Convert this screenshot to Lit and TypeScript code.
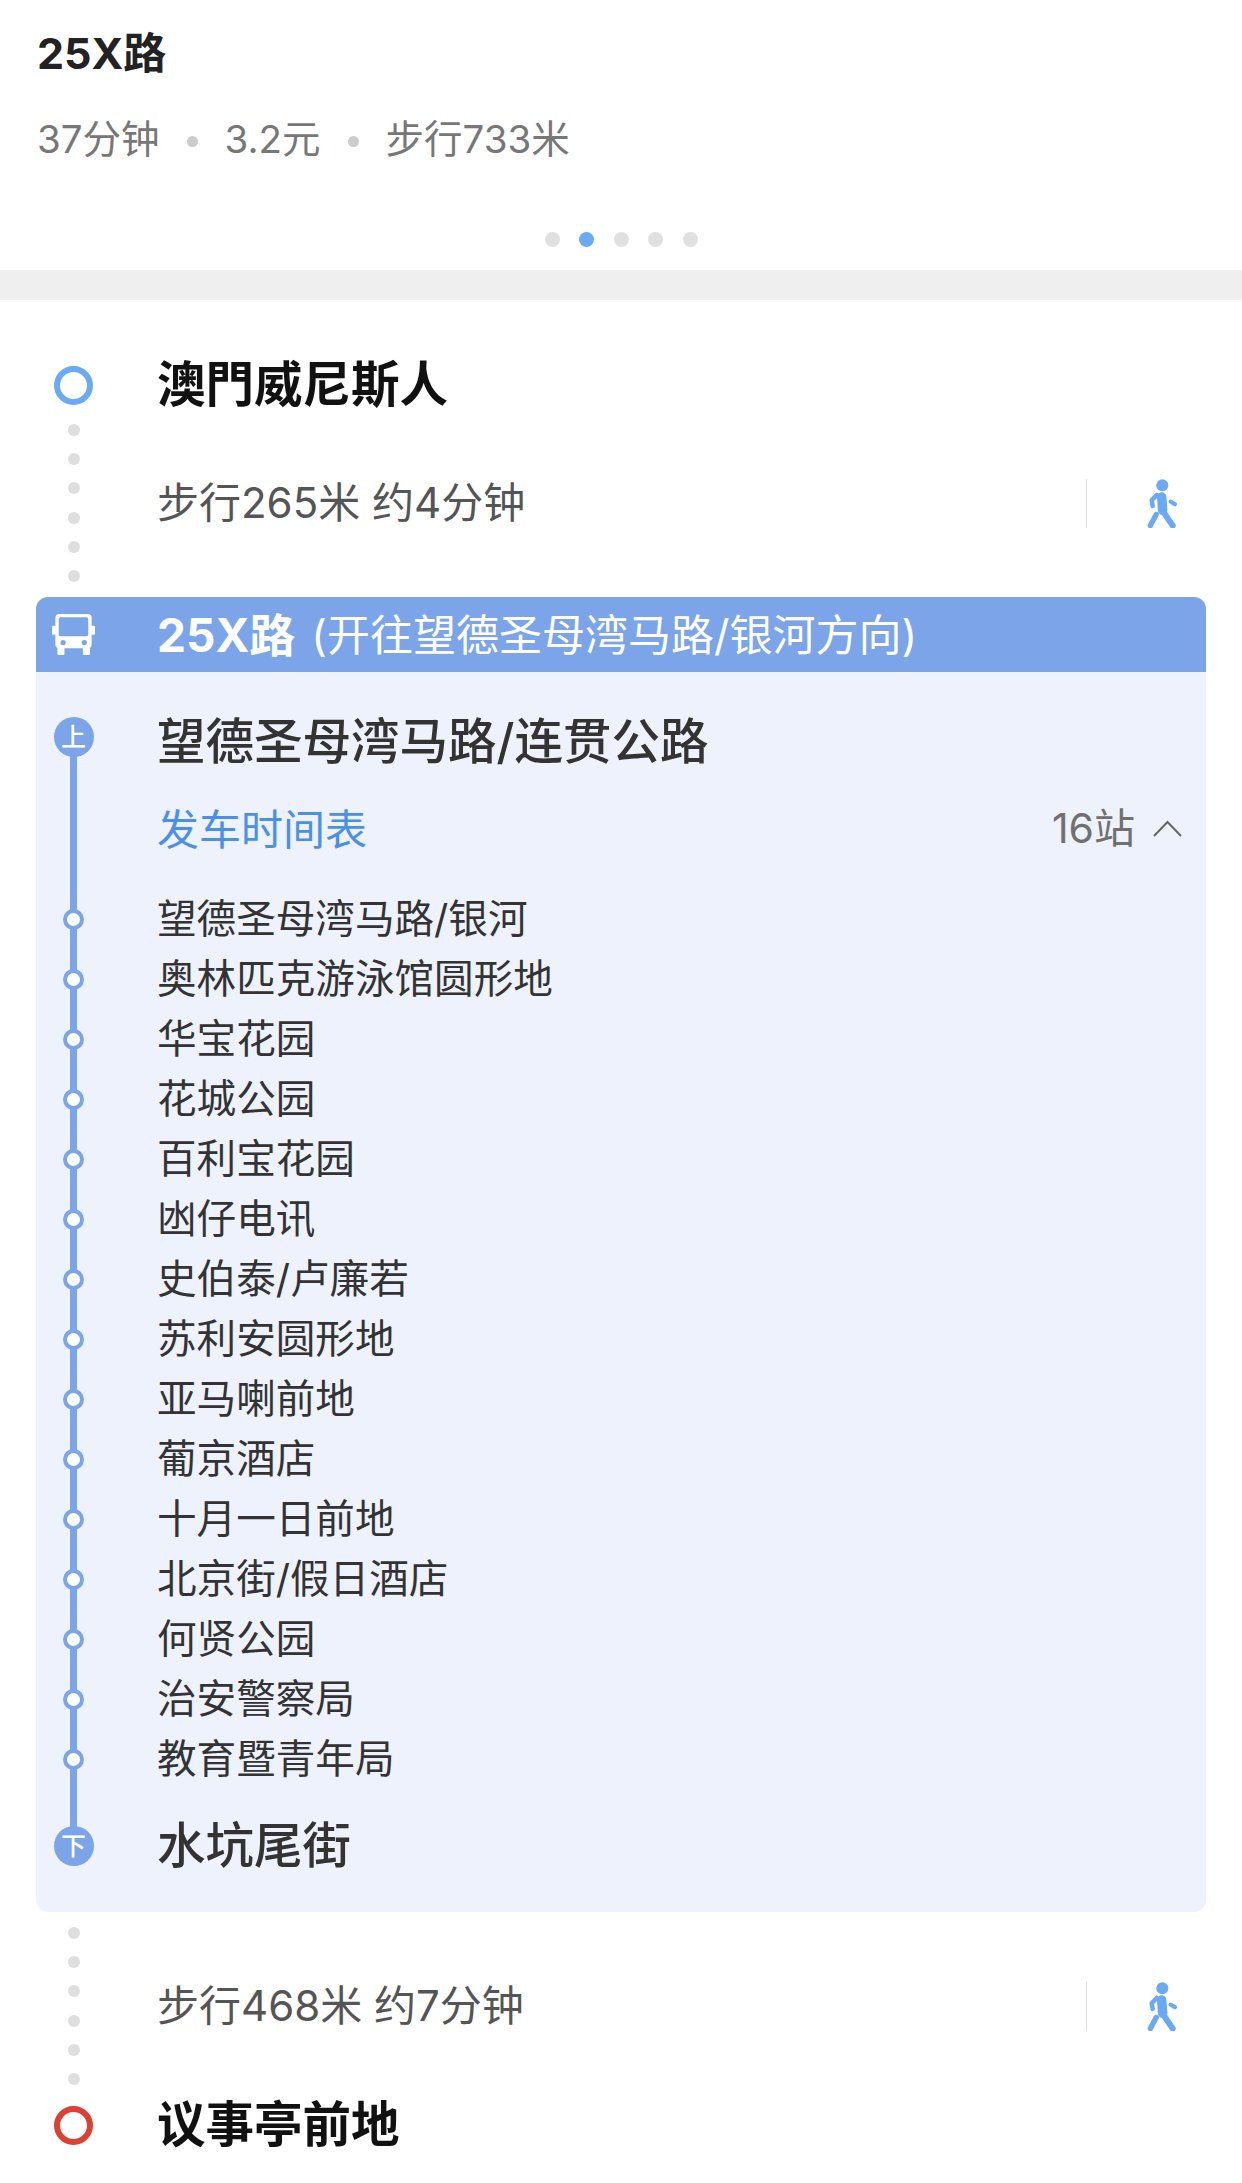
import { LitElement, html, css, svg } from "lit";
import { customElement } from "lit/decorators.js";

const STOPS = [
  "望德圣母湾马路/银河",
  "奥林匹克游泳馆圆形地",
  "华宝花园",
  "花城公园",
  "百利宝花园",
  "凼仔电讯",
  "史伯泰/卢廉若",
  "苏利安圆形地",
  "亚马喇前地",
  "葡京酒店",
  "十月一日前地",
  "北京街/假日酒店",
  "何贤公园",
  "治安警察局",
  "教育暨青年局",
];

const walker = svg`
  <circle cx="15.3" cy="6.3" r="6" fill="#6aa9f4"></circle>
  <g fill="none" stroke="#6aa9f4" stroke-linecap="round" stroke-linejoin="round">
    <path d="M14.7 18L15.7 31.3" stroke-width="9.5"></path>
    <path d="M9.7 16L4.7 21.3L5.7 27" stroke-width="4.5"></path>
    <path d="M23.5 22.5L28 25.3" stroke-width="4"></path>
    <path d="M17 33.7L20.3 38.7L25.7 46.5" stroke-width="6"></path>
    <path d="M9.2 35.5L3.4 46.5" stroke-width="5.4"></path>
  </g>`;

@customElement("app-root")
export class AppRoot extends LitElement {
  static styles = css`
    :host {
      display: block;
      width: 1242px;
      height: 2183px;
      overflow: hidden;
      background: #fff;
      font-family: Inter, "Noto Sans CJK SC", sans-serif;
    }
    .summary {
      height: 270px;
      box-sizing: border-box;
      padding: 23px 37px 0;
    }
    .title {
      font-size: 43px;
      line-height: 60px;
      font-weight: 700;
      color: #222;
    }
    .meta {
      display: flex;
      align-items: center;
      gap: 27px;
      margin-top: 26px;
      font-size: 38.5px;
      line-height: 60px;
      color: #777;
    }
    .sep {
      width: 11px;
      height: 11px;
      border-radius: 50%;
      background: #ccc;
      margin-top: 4px;
    }
    .pager {
      display: flex;
      justify-content: center;
      gap: 19.5px;
      margin-top: 63px;
    }
    .pager i {
      width: 15px;
      height: 15px;
      border-radius: 50%;
      background: #e0e0e0;
    }
    .pager i.on {
      background: #6aa9f4;
    }
    .band {
      height: 30px;
      background: #efefef;
    }
    .route {
      padding: 46px 36px 0;
    }
    .row {
      display: grid;
      grid-template-columns: 75px 1fr;
      column-gap: 46px;
      align-items: center;
      line-height: 60px;
    }
    .rail {
      display: flex;
      flex-direction: column;
      align-items: center;
      justify-content: center;
    }
    .place {
      height: 78px;
      font-size: 48.5px;
      font-weight: 700;
      color: #111;
    }
    .place.last {
      margin-top: 1px;
    }
    .ring {
      width: 39px;
      height: 39px;
      box-sizing: border-box;
      border-radius: 50%;
      border: 6px solid #6aa9f4;
    }
    .ring.end {
      border-color: #dd3f33;
    }
    .walk {
      height: 158px;
    }
    .dots {
      gap: 17.2px;
    }
    .dots i {
      width: 12px;
      height: 12px;
      border-radius: 50%;
      background: #dedede;
    }
    .walk-body {
      display: flex;
      align-items: center;
      font-size: 42px;
      color: #555;
      padding-right: 29px;
    }
    .divider {
      width: 1.5px;
      height: 49px;
      background: #ddd;
      margin-left: auto;
    }
    .walk-body svg {
      width: 30px;
      height: 49px;
      margin-left: 60px;
    }
    .panel {
      margin: 15px 0;
      background: #edf2fc;
      border-radius: 12px;
      overflow: hidden;
    }
    .panel-head {
      height: 75px;
      background: #7ba5e8;
      color: #fff;
      font-size: 43px;
    }
    .panel-head svg {
      width: 43px;
      height: 41px;
      display: block;
    }
    .head-text {
      display: flex;
      align-items: center;
      white-space: nowrap;
    }
    .head-text b {
      font-size: 46px;
      font-weight: 700;
      margin-right: 16px;
    }
    .panel-body {
      position: relative;
      padding: 40px 24px 36px 0;
    }
    .line {
      position: absolute;
      left: 34px;
      top: 65px;
      bottom: 65px;
      width: 7px;
      background: #7ba5e8;
    }
    .panel-body .row {
      position: relative;
      height: 60px;
    }
    .major {
      font-size: 48.5px;
      font-weight: 500;
      color: #333;
    }
    .badge {
      width: 40px;
      height: 40px;
      border-radius: 50%;
      background: #7ba5e8;
      color: #fff;
      font-size: 25px;
      line-height: 40px;
      text-align: center;
    }
    .board .badge {
      margin-top: -10px;
    }
    .timetable,
    .alight {
      margin-top: 28px;
    }
    .timetable-body {
      display: flex;
      align-items: center;
      justify-content: space-between;
    }
    .link {
      font-size: 42px;
      color: #4a90e8;
    }
    .count {
      display: flex;
      align-items: center;
      gap: 18px;
      font-size: 41px;
      color: #707070;
      margin-top: -4px;
    }
    .count svg {
      width: 29px;
      height: 17px;
    }
    .stops {
      margin-top: 28px;
    }
    .stop {
      font-size: 39.6px;
      line-height: 62px;
      color: #333;
    }
    .node {
      width: 21px;
      height: 21px;
      box-sizing: border-box;
      border-radius: 50%;
      background: #fff;
      border: 4.5px solid #7ba5e8;
    }
  `;

  private walkSeg(text: string) {
    return html`<div class="row walk">
      <div class="rail dots">${[0, 1, 2, 3, 4, 5].map(() => html`<i></i>`)}</div>
      <div class="walk-body">
        <span>${text}</span>
        <span class="divider"></span>
        <svg viewBox="0 0 30 49">${walker}</svg>
      </div>
    </div>`;
  }

  render() {
    return html`
      <section class="summary">
        <div class="title">25X路</div>
        <div class="meta">
          <span>37分钟</span><i class="sep"></i><span>3.2元</span><i class="sep"></i><span>步行733米</span>
        </div>
        <div class="pager">
          ${[0, 1, 2, 3, 4].map((n) => html`<i class=${n === 1 ? "on" : ""}></i>`)}
        </div>
      </section>
      <div class="band"></div>
      <section class="route">
        <div class="row place">
          <div class="rail"><span class="ring"></span></div>
          <div>澳門威尼斯人</div>
        </div>
        ${this.walkSeg("步行265米 约4分钟")}
        <div class="panel">
          <div class="row panel-head">
            <div class="rail">
              <svg viewBox="0 0 128 122">
                <rect x="10" y="0" width="108" height="102" rx="12" fill="#fff"></rect>
                <rect x="20" y="10" width="88" height="56" rx="5" fill="#7ba5e8"></rect>
                <circle cx="33" cy="85" r="8" fill="#7ba5e8"></circle>
                <circle cx="96" cy="85" r="8" fill="#7ba5e8"></circle>
                <rect x="16" y="98" width="21" height="24" rx="3" fill="#fff"></rect>
                <rect x="92" y="98" width="21" height="24" rx="3" fill="#fff"></rect>
                <rect x="0" y="35" width="12" height="27" rx="3" fill="#fff"></rect>
                <rect x="116" y="35" width="12" height="27" rx="3" fill="#fff"></rect>
              </svg>
            </div>
            <div class="head-text"><b>25X路</b><span>(开往望德圣母湾马路/银河方向)</span></div>
          </div>
          <div class="panel-body">
            <div class="line"></div>
            <div class="row board major">
              <div class="rail"><span class="badge">上</span></div>
              <div>望德圣母湾马路/连贯公路</div>
            </div>
            <div class="row timetable">
              <div></div>
              <div class="timetable-body">
                <span class="link">发车时间表</span>
                <span class="count">
                  <span>16站</span>
                  <svg viewBox="0 0 29 17"><path d="M1 16L14.5 2L28 16" fill="none" stroke="#666" stroke-width="2"></path></svg>
                </span>
              </div>
            </div>
            <div class="stops">
              ${STOPS.map(
                (s) => html`<div class="row stop">
                  <div class="rail"><span class="node"></span></div>
                  <div>${s}</div>
                </div>`
              )}
            </div>
            <div class="row alight major">
              <div class="rail"><span class="badge">下</span></div>
              <div>水坑尾街</div>
            </div>
          </div>
        </div>
        ${this.walkSeg("步行468米 约7分钟")}
        <div class="row place last">
          <div class="rail"><span class="ring end"></span></div>
          <div>议事亭前地</div>
        </div>
      </section>
    `;
  }
}
